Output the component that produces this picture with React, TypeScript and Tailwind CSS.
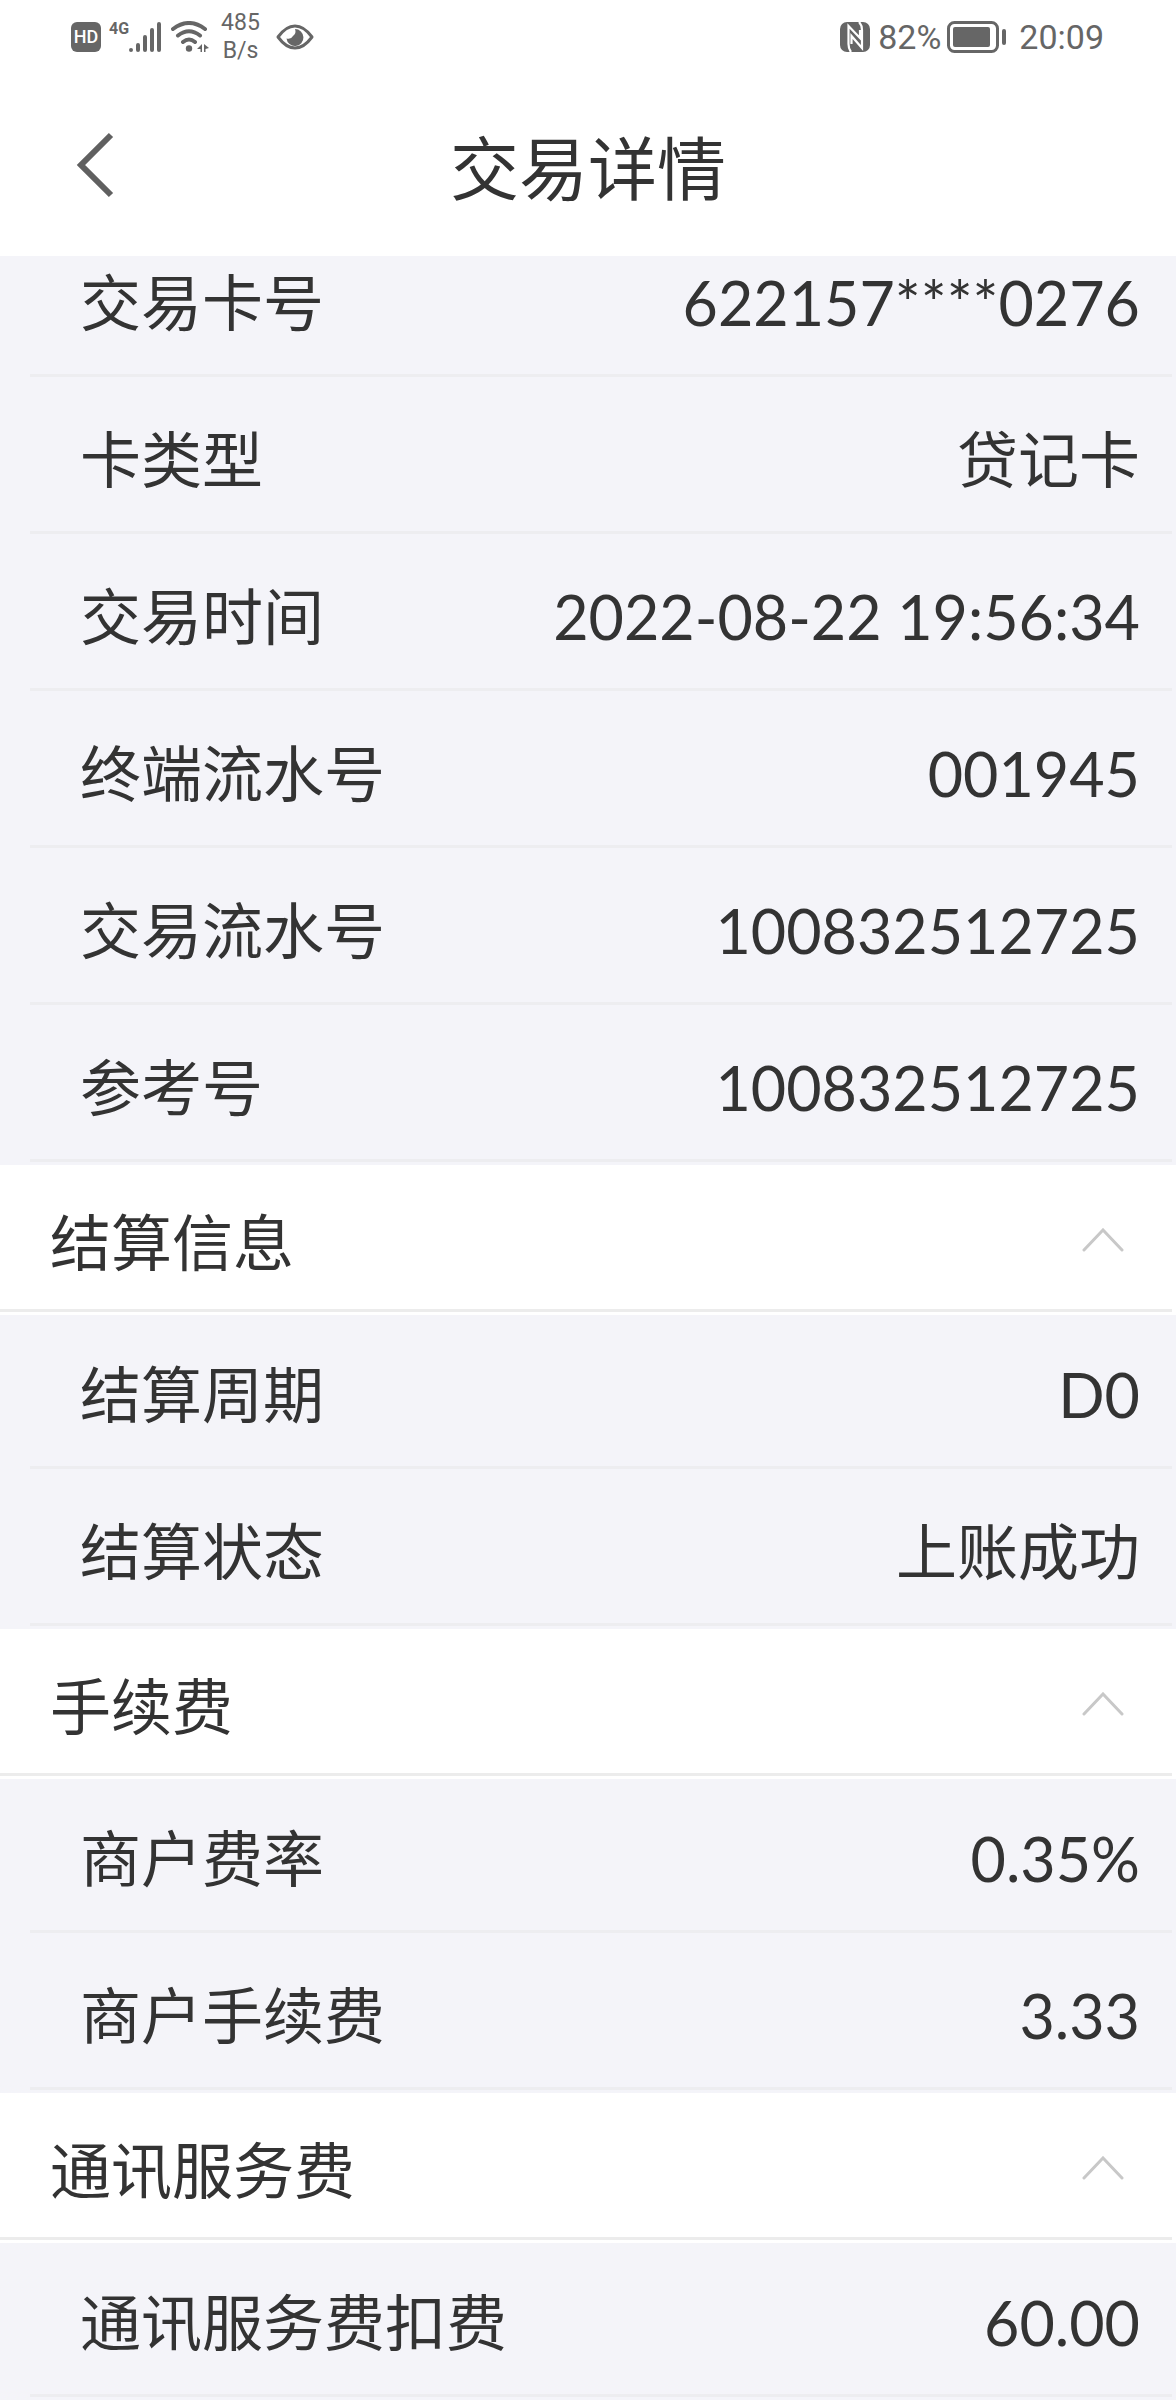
import { useState } from "react";

type Item = { label: string; value: string };
type Group = { title: string; items: Item[] };

const tradeItems: Item[] = [
  { label: "交易卡号", value: "622157****0276" },
  { label: "卡类型", value: "贷记卡" },
  { label: "交易时间", value: "2022-08-22 19:56:34" },
  { label: "终端流水号", value: "001945" },
  { label: "交易流水号", value: "100832512725" },
  { label: "参考号", value: "100832512725" },
];

const groups: Group[] = [
  {
    title: "结算信息",
    items: [
      { label: "结算周期", value: "D0" },
      { label: "结算状态", value: "上账成功" },
    ],
  },
  {
    title: "手续费",
    items: [
      { label: "商户费率", value: "0.35%" },
      { label: "商户手续费", value: "3.33" },
    ],
  },
  {
    title: "通讯服务费",
    items: [{ label: "通讯服务费扣费", value: "60.00" }],
  },
];

function SignalIcon() {
  return (
    <svg width="32" height="32" viewBox="0 0 32 32" stroke="currentColor" strokeWidth="4" strokeLinecap="round" aria-hidden="true">
      <path d="M2 29v0.100M9 24v5M16 16v13M23 9v20M30 3v26" />
    </svg>
  );
}

function WifiIcon() {
  return (
    <svg width="38" height="32" viewBox="0 0 38 32" fill="none" stroke="currentColor" strokeLinecap="round" aria-hidden="true">
      <path d="M2 8Q18 -4 34 8M7 14.500Q18 6 29 14.500M12 21Q18 16 24 21" strokeWidth="4" />
      <circle cx="18" cy="27.500" r="3.200" fill="currentColor" stroke="none" />
      <path d="M31 23v8h-1.500v-3H26zM33 23l5 4-3.500 1v3H33z" fill="currentColor" stroke="none" />
    </svg>
  );
}

function EyeIcon() {
  return (
    <svg width="38" height="26" viewBox="0 0 38 26" aria-hidden="true">
      <path d="M2 13Q10 2 19 2T36 13Q28 24 19 24T2 13Z" fill="none" stroke="currentColor" strokeWidth="3" strokeLinejoin="round" />
      <path d="M19 5a8.500 8.500 0 1 1-8.500 9.500 5.500 5.500 0 0 0 6.500-2.500 6 6 0 0 0 2-7z" fill="currentColor" />
    </svg>
  );
}

function NfcIcon() {
  return (
    <svg width="30" height="30" viewBox="0 0 30 30" aria-hidden="true">
      <rect width="30" height="30" rx="7" fill="currentColor" />
      <path
        d="M11 30Q8.500 27 8.500 22V4L20 16V8M19 0Q22 3 22 8V26L11.500 14V22"
        fill="none"
        stroke="#fff"
        strokeWidth="2.200"
      />
    </svg>
  );
}

function BatteryIcon() {
  return (
    <svg width="60" height="32" viewBox="0 0 60 32" aria-hidden="true">
      <rect x="1.500" y="1.500" width="49" height="29" rx="6" fill="none" stroke="currentColor" strokeWidth="3" />
      <rect x="6" y="6" width="37" height="20" rx="2" fill="currentColor" />
      <rect x="55" y="8" width="4" height="16" rx="2" fill="currentColor" />
    </svg>
  );
}

function StatusBar() {
  return (
    <div className="flex h-[74px] items-center justify-between pl-[71px] pr-[72px] font-['Roboto',sans-serif] text-[#666]">
      <div className="flex items-center">
        <span className="flex h-[30px] w-[30px] items-center justify-center rounded-[6px] bg-[#666] text-[18px] font-medium text-white">HD</span>
        <span className="ml-2 -mt-4 text-[16px] font-bold leading-4">4G</span>
        <SignalIcon />
        <span className="ml-2.5">
          <WifiIcon />
        </span>
        <span className="ml-3 flex flex-col items-center text-[23px] leading-7">
          <span>485</span>
          <span>B/s</span>
        </span>
        <span className="ml-4">
          <EyeIcon />
        </span>
      </div>
      <div className="flex items-center text-[34px]">
        <NfcIcon />
        <span className="ml-2 mr-1.5">82%</span>
        <BatteryIcon />
        <span className="ml-3">20:09</span>
      </div>
    </div>
  );
}

function ItemList({ items }: { items: Item[] }) {
  return (
    <dl className="bg-[#f4f4f9]">
      {items.map((item) => (
        <div key={item.label} className="pb-[3px] pl-[30px] pr-1">
          <div className="flex h-[154px] items-center justify-between border-b-3 border-[#ededf0] pl-[50px] pr-8 pt-2">
            <dt>{item.label}</dt>
            <dd>{item.value}</dd>
          </div>
        </div>
      ))}
    </dl>
  );
}

function Section({ group }: { group: Group }) {
  const [open, setOpen] = useState(true);

  return (
    <section>
      <h2 className="bg-white pb-[3px] pr-1">
        <button
          type="button"
          aria-expanded={open}
          onClick={() => setOpen(!open)}
          className="flex h-[147px] w-full items-center justify-between border-b-3 border-[#ececec] pl-[50px] pr-12"
        >
          <span className="pt-3">{group.title}</span>
          <svg
            width="42"
            height="24"
            viewBox="0 0 42 24"
            fill="none"
            stroke="#c8c8c8"
            strokeWidth="3"
            strokeLinecap="round"
            className={open ? "mt-1.5" : "mt-1.5 rotate-180"}
            aria-hidden="true"
          >
            <path d="M2 22L21 2L40 22" />
          </svg>
        </button>
      </h2>
      {open && <ItemList items={group.items} />}
    </section>
  );
}

export default function App() {
  return (
    <div className="min-h-screen bg-[#f4f4f9] font-['Lato','Noto_Sans_CJK_SC',sans-serif] text-[61px] leading-[88px] text-[#333]">
      <header className="relative z-10 bg-white">
        <StatusBar />
        <div className="grid h-[182px] grid-cols-[1fr_auto_1fr] items-center">
          <button type="button" aria-label="返回" className="w-fit pl-[76px] text-[#606060]">
            <svg width="40" height="66" viewBox="0 0 40 66" fill="none" stroke="currentColor" strokeWidth="6">
              <path d="M35 3L5 33L35 63" />
            </svg>
          </button>
          <h1 className="pt-2 text-[69px]">交易详情</h1>
        </div>
      </header>

      {/* first row is partly scrolled under the header */}
      <main className="-mt-[33px]">
        <ItemList items={tradeItems} />
        {groups.map((group) => (
          <Section key={group.title} group={group} />
        ))}
      </main>
    </div>
  );
}
